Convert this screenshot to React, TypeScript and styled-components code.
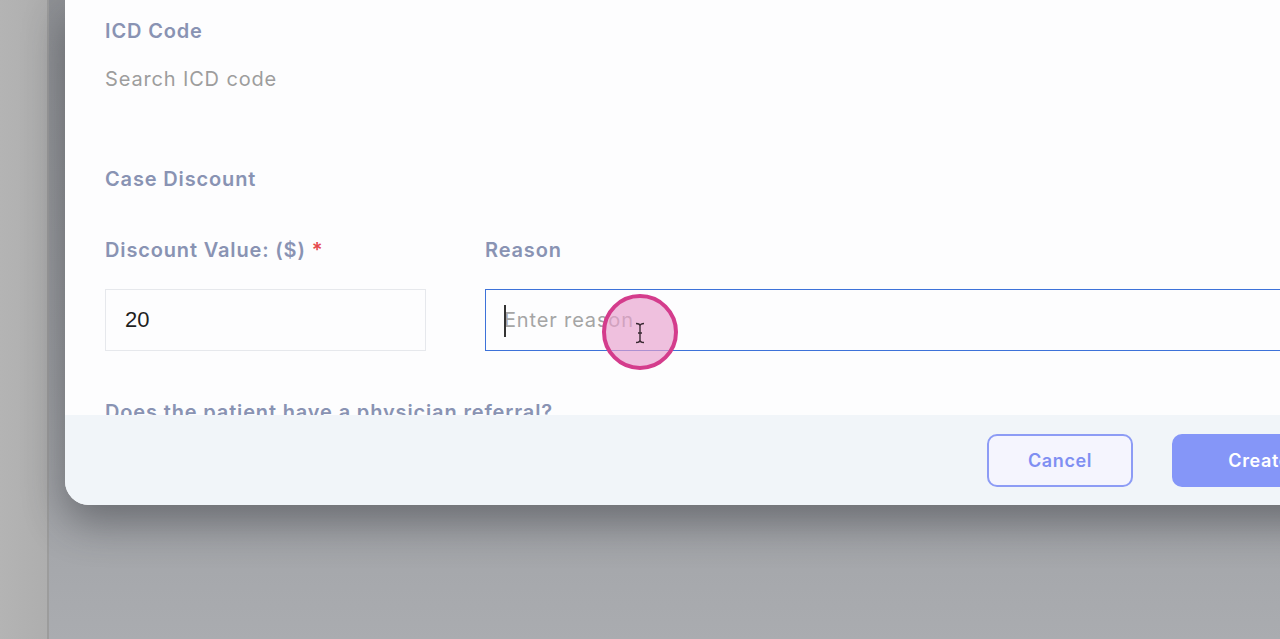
import React from "react";
import styled, { createGlobalStyle } from "styled-components";

const Global = createGlobalStyle`
  html, body { margin: 0; padding: 0; }
  body { font-family: "Inter", "Open Sans", sans-serif; overflow: hidden; }
`;

const Page = styled.div`
  position: relative;
  width: 1280px;
  height: 639px;
  display: flex;
  overflow: hidden;
  background: #a9abaf;
`;

const LeftStrip = styled.div`
  width: 47px;
  flex: none;
  background: linear-gradient(90deg, #b4b4b4 0%, #aeaeae 100%);
  border-right: 2px solid #9c9c9c;
`;

const Backdrop = styled.div`
  flex: 1;
  display: flex;
  align-items: flex-start;
  padding-left: 16px;
  background: linear-gradient(180deg, #8e9094 0%, #9b9da1 60%, #aaacb0 100%);
  min-width: 0;
`;

const Modal = styled.div`
  width: 1373px;
  flex: none;
  height: 505px;
  display: flex;
  flex-direction: column;
  background: #fdfdfe;
  border-radius: 0 0 24px 24px;
  overflow: hidden;
  box-shadow: 0 18px 40px rgba(40, 42, 48, 0.45);
`;

const Body = styled.div`
  flex: 1;
  overflow: hidden;
  padding: 19px 40px 0;
  display: flex;
  flex-direction: column;
`;

const Label = styled.div<{ $mt?: number }>`
  margin-top: ${(p) => p.$mt ?? 0}px;
  font-size: 20px;
  letter-spacing: 0.85px;
  line-height: 24px;
  font-weight: 600;
  color: #8993b3;
  white-space: nowrap;
`;

const Req = styled.span`
  color: #e5484d;
  margin-left: 6px;
`;

const Placeholder = styled.div<{ $mt?: number }>`
  margin-top: ${(p) => p.$mt ?? 0}px;
  font-size: 20px;
  letter-spacing: 0.85px;
  line-height: 24px;
  color: #9d9d9d;
`;

const Row = styled.div`
  margin-top: 47px;
  display: grid;
  grid-template-columns: 321px 1fr;
  column-gap: 59px;
`;

const Field = styled.div`
  display: flex;
  flex-direction: column;
  gap: 27px;
`;

const InputBox = styled.div<{ $focused?: boolean }>`
  position: relative;
  height: 62px;
  box-sizing: border-box;
  border: 1px solid ${(p) => (p.$focused ? "#3d72d9" : "#e6e8ec")};
  background: #fdfdfe;
  display: flex;
  align-items: center;
`;

const Input = styled.input<{ $value?: boolean }>`
  border: none;
  outline: none;
  background: transparent;
  width: 100%;
  height: 100%;
  padding: 0 0 0 ${(p) => (p.$value ? 19 : 18)}px;
  font-family: ${(p) => (p.$value ? '"Liberation Sans", Arial, sans-serif' : '"Inter", sans-serif')};
  font-size: ${(p) => (p.$value ? 22 : 20)}px;
  letter-spacing: ${(p) => (p.$value ? 0 : 0.85)}px;
  color: #1f1f1f;
  &::placeholder {
    color: #a5a5a5;
  }
`;

const Caret = styled.span`
  position: absolute;
  left: 18px;
  top: 15px;
  width: 2px;
  height: 32px;
  background: #333;
`;

const Question = styled(Label)`
  margin-top: 49px;
`;

const Footer = styled.div`
  height: 90px;
  flex: none;
  background: #f1f5f9;
  display: flex;
  align-items: center;
  justify-content: flex-end;
  gap: 39px;
  padding-right: 40px;
`;

const Button = styled.button<{ $primary?: boolean }>`
  height: 53px;
  width: ${(p) => (p.$primary ? 226 : 146)}px;
  box-sizing: border-box;
  border-radius: 10px;
  border: 2px solid ${(p) => (p.$primary ? "#8596f8" : "#8d9cf5")};
  background: ${(p) => (p.$primary ? "#8596f8" : "#f5f5fe")};
  color: ${(p) => (p.$primary ? "#ffffff" : "#7f8ff2")};
  font-family: "Inter", sans-serif;
  font-size: 18px;
  letter-spacing: 0.6px;
  font-weight: 600;
  padding: 0;
  cursor: pointer;
`;

const ClickRing = styled.div`
  position: absolute;
  left: 602px;
  top: 294px;
  width: 76px;
  height: 76px;
  box-sizing: border-box;
  border-radius: 50%;
  border: 4px solid #d43c8c;
  background: rgba(232, 160, 204, 0.65);
  display: flex;
  align-items: center;
  justify-content: center;
  pointer-events: none;
`;

export default function App() {
  return (
    <>
      <Global />
      <Page>
        <LeftStrip />
        <Backdrop>
          <Modal>
            <Body>
              <Label>ICD Code</Label>
              <Placeholder $mt={24}>Search ICD code</Placeholder>
              <Label $mt={76}>Case Discount</Label>
              <Row>
                <Field>
                  <Label>
                    Discount Value: ($)<Req>*</Req>
                  </Label>
                  <InputBox>
                    <Input $value defaultValue="20" />
                  </InputBox>
                </Field>
                <Field>
                  <Label>Reason</Label>
                  <InputBox $focused>
                    <Input placeholder="Enter reason" />
                    <Caret />
                  </InputBox>
                </Field>
              </Row>
              <Question>Does the patient have a physician referral?</Question>
            </Body>
            <Footer>
              <Button>Cancel</Button>
              <Button $primary>Create Case</Button>
            </Footer>
          </Modal>
        </Backdrop>
        <ClickRing>
          <svg width="12" height="22" viewBox="0 0 12 22" style={{ marginTop: 2 }}>
            <path
              d="M2 1.5 C4 1.5 6 2.5 6 4 C6 2.5 8 1.5 10 1.5 M6 4 V18 M2 20.5 C4 20.5 6 19.5 6 18 C6 19.5 8 20.5 10 20.5 M4 11 H8"
              fill="none"
              stroke="#3a2a33"
              strokeWidth="1.4"
            />
          </svg>
        </ClickRing>
      </Page>
    </>
  );
}
